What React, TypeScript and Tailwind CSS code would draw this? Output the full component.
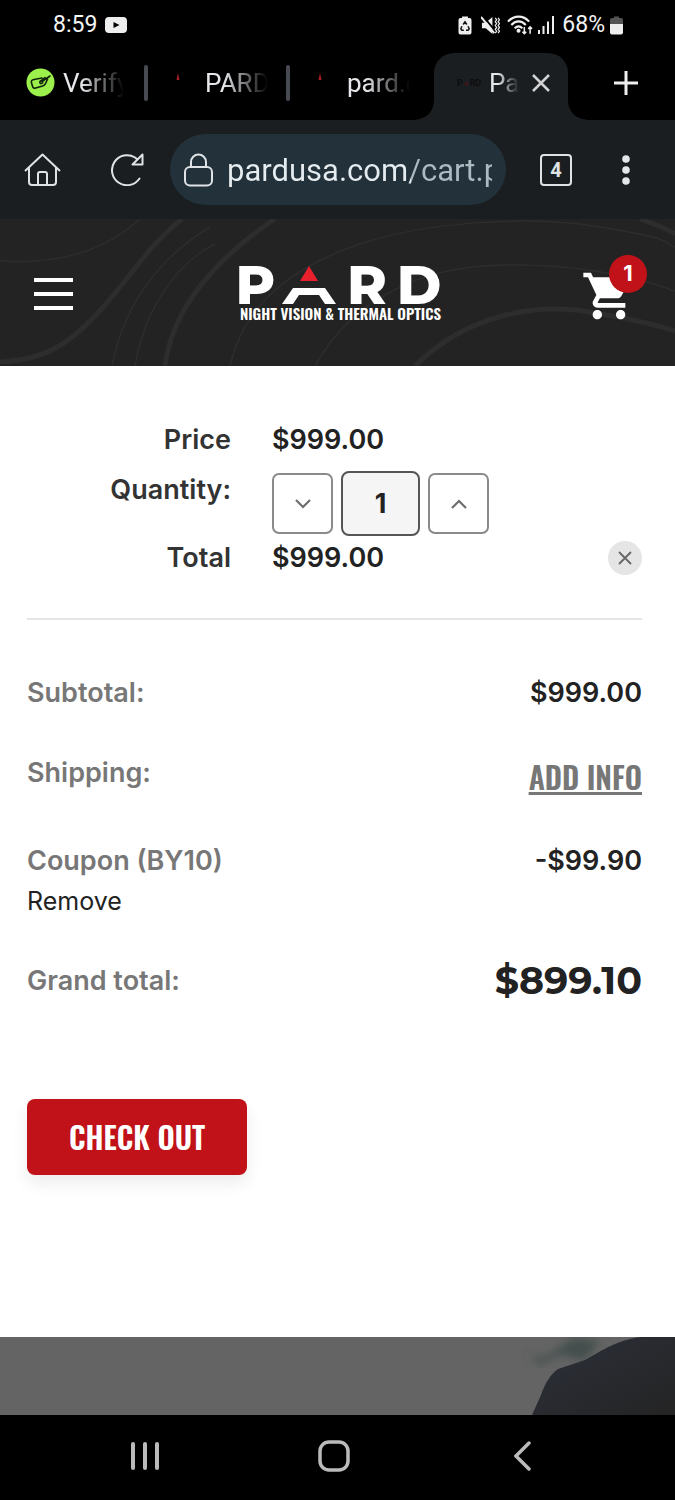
import { useState } from 'react';
import type { ReactNode } from 'react';
import { MdShoppingCart } from 'react-icons/md';

const condensed = 'font-["Oswald","Roboto_Condensed","Liberation_Sans_Narrow","Liberation_Sans",sans-serif]';
const PRICE = 999;

const money = (n: number) => `${n < 0 ? '-' : ''}$${Math.abs(n).toFixed(2)}`;

function StatusBar() {
  return (
    <div className="flex items-center justify-between pt-[9px] pr-[52px] pl-[53px] text-[23px] leading-8 text-gray-100">
      <div className="flex items-center gap-2">
        <span>8:59</span>
        <svg width="22" height="16" viewBox="0 0 22 16">
          <rect width="22" height="16" rx="4" fill="#eee" />
          <path d="M8.5 5v6l6-3z" fill="#000" />
        </svg>
      </div>
      <div className="flex items-center gap-[5px]">
        <svg width="14" height="19" viewBox="0 0 14 19">
          <path d="M4 2V0.5h6V2h1.5A2 2 0 0 1 13.500 4v12.500a2 2 0 0 1-2 2h-9a2 2 0 0 1-2-2V4a2 2 0 0 1 2-2z" fill="#eee" />
          <path d="M5.200 8.500 7 5.800l1.800 2.700M10 10.200l1.200 2.600-1.200 1.400H8M5.800 14.200H4l-1.200-1.400L4 10.200" fill="none" stroke="#111" strokeWidth="1.500" />
        </svg>
        <svg className="ml-1" width="19" height="19" viewBox="0 0 20 20">
          <path d="M1 7h4l7-6v18l-7-6H1z" fill="#eee" />
          <path d="M2 0l14 17" stroke="#000" strokeWidth="2" />
          <path d="M0 1l14 17" stroke="#eee" strokeWidth="2" />
          <path d="M15 2l1.500 2L15 6l1.500 2L15 10l1.500 2L15 14l1.500 2L15 18M18 2l1.500 2L18 6l1.500 2L18 10l1.500 2L18 14l1.500 2L18 18" fill="none" stroke="#eee" strokeWidth="1.300" />
        </svg>
        <svg className="ml-[2px]" width="26" height="20" viewBox="0 0 27 20" fill="none" stroke="#eee" strokeWidth="2.200">
          <path d="M1 6.500C7-.5 17-.5 23 6.500M4.500 10C9 5 15 5 19.500 10M8 13.500c2.500-2.700 5.500-2.700 8 0" />
          <circle cx="12" cy="16" r="1" />
          <path d="M18 12v7M16 17l2 2 2-2M24 19v-7M22 14l2-2 2 2" strokeWidth="1.600" />
        </svg>
        <svg width="17" height="18" viewBox="0 0 17 18" fill="#eee">
          <path d="M0 14h2v4H0zM4.500 10h2v8h-2zM9 5.500h2V18H9zM14 0h2v18h-2z" />
        </svg>
        <span className="ml-[2px]">68%</span>
        <svg width="13" height="19" viewBox="0 0 13 19">
          <path d="M4 2V.5h5V2h2a2 2 0 0 1 2 2v4H0V4a2 2 0 0 1 2-2z" fill="#555" />
          <path d="M0 8h13v8.500a2 2 0 0 1-2 2H2a2 2 0 0 1-2-2z" fill="#eee" />
        </svg>
      </div>
    </div>
  );
}

function TabLabel({ children }: { children: ReactNode }) {
  return (
    <span className="min-w-0 overflow-hidden whitespace-nowrap text-gray-200 [mask-image:linear-gradient(to_right,black_30%,transparent)]">
      {children}
    </span>
  );
}

function RedTick() {
  return (
    <svg className="mb-3 shrink-0" width="6" height="8" viewBox="0 0 6 8">
      <path d="M3 0l1.500 7h-3z" fill="#a81e28" />
    </svg>
  );
}

function TabStrip() {
  return (
    <div className="grid grid-cols-[minmax(0,146fr)_minmax(0,142fr)_minmax(0,146fr)_minmax(0,134fr)_minmax(0,107fr)] pt-3 text-[26px] leading-8">
      <button className="flex items-center gap-2 pr-[22px] pb-2 pl-[26px]">
        <svg className="shrink-0" width="29" height="29" viewBox="0 0 29 29">
          <circle cx="14.500" cy="14.500" r="14" fill="#9cf04c" />
          <path d="M16 10l-8 1.500c-2 .4-3 1.500-2.600 3l1.200 4c.4 1.500 1.600 2 3 1.600l7-2c1.500-.5 2.300-1.300 3-2.700l2-4.400M24 8l-8 5.500M14 13.500c1-1 3-.5 2.700 1-.3 1-2 1.500-2.700.5s.5-2.500 2-3l3-2.500" fill="none" stroke="#10240a" strokeWidth="1.600" strokeLinecap="round" />
        </svg>
        <TabLabel>Verify</TabLabel>
      </button>
      <button className="flex items-center pb-2">
        <span className="-ml-[2px] h-9 w-1 rounded-sm bg-[#484b51]" />
        <span className="flex min-w-0 flex-1 items-center gap-6 pr-5 pl-[27px]">
          <RedTick />
          <TabLabel>PARD</TabLabel>
        </span>
      </button>
      <button className="flex items-center pb-2">
        <span className="-ml-[2px] h-9 w-1 rounded-sm bg-[#484b51]" />
        <span className="flex min-w-0 flex-1 items-center gap-6 pr-6 pl-[27px]">
          <RedTick />
          <TabLabel>pard.c</TabLabel>
        </span>
      </button>
      <div className="relative flex h-[67px] items-center rounded-t-[20px] bg-[#1b1e21] pr-[17px] pb-2 pl-4">
        <svg className="absolute bottom-0 -left-5" width="20" height="20" viewBox="0 0 20 20">
          <path d="M20 0v20H0C12 19 20 12 20 0z" fill="#1b1e21" />
        </svg>
        <svg className="absolute -right-5 bottom-0" width="20" height="20" viewBox="0 0 20 20">
          <path d="M0 0v20h20C8 19 0 12 0 0z" fill="#1b1e21" />
        </svg>
        <span className="flex w-[38px] items-center justify-center text-[9px] leading-4 font-bold text-[#0c0d0f]">
          P<span className="text-[7px] text-[#4a1317]">▲</span>RD
        </span>
        <span className="ml-[1px] flex text-gray-300">
          <TabLabel>Pa</TabLabel>
        </span>
        <button className="ml-auto" aria-label="Close tab">
          <svg width="20" height="20" viewBox="0 0 20 20" stroke="#d0d2d4" strokeWidth="2.500">
            <path d="M2 2l16 16M18 2L2 18" />
          </svg>
        </button>
      </div>
      <button className="flex items-center justify-center pb-2 pl-2" aria-label="New tab">
        <svg width="24" height="24" viewBox="0 0 24 24" stroke="#eee" strokeWidth="3">
          <path d="M12 0v24M0 12h24" />
        </svg>
      </button>
    </div>
  );
}

function Toolbar() {
  return (
    <div className="flex items-center bg-[#1b1e21] pt-[14px] pr-[45px] pb-[14px] pl-6">
      <button aria-label="Home">
        <svg width="37" height="34" viewBox="0 0 37 34" fill="none" stroke="#dfe3e5" strokeWidth="2" strokeLinejoin="round">
          <path d="M1 18L18.500 1.500 36 18M5 14.500V29a3 3 0 0 0 3 3h21a3 3 0 0 0 3-3V14.500M14 32V21a2 2 0 0 1 2-2h5a2 2 0 0 1 2 2v11" />
        </svg>
      </button>
      <button className="ml-[50px]" aria-label="Reload">
        <svg width="33" height="33" viewBox="0 0 33 33" fill="none" stroke="#dfe3e5" strokeWidth="2" strokeLinejoin="round" strokeLinecap="round">
          <path d="M28.500 25.500A15 15 0 1 1 24 4.500l2.500 2M31.500 1.500v10h-10z" />
        </svg>
      </button>
      <label className="ml-[26px] flex h-[71px] min-w-0 flex-1 items-center rounded-full bg-[#22313a] pr-[14px] pl-[14px]">
        <svg className="shrink-0" width="29" height="34" viewBox="0 0 29 34" fill="none" stroke="#dfe3e5" strokeWidth="2">
          <rect x="1" y="14" width="27" height="18.500" rx="5" />
          <path d="M7 14V9a7.500 7.500 0 0 1 15 0v5" />
        </svg>
        <input
          aria-label="Address"
          readOnly
          value="pardusa.com/cart.p"
          className="ml-[14px] h-12 min-w-0 flex-1 bg-linear-to-r from-[#e6edf1] from-[184px] to-[#aebac1] to-[184px] bg-clip-text pt-[2px] text-[31px] text-transparent outline-none"
        />
      </label>
      <button className="ml-[34px] flex size-8 items-center justify-center rounded-[4px] border-2 border-[#dfe3e5] text-xl leading-6 font-bold text-[#dfe3e5]">
        4
      </button>
      <button className="ml-[50px]" aria-label="Menu">
        <svg width="8" height="30" viewBox="0 0 8 30" fill="#e4e6e8">
          <circle cx="4" cy="4" r="3.800" />
          <circle cx="4" cy="15" r="3.800" />
          <circle cx="4" cy="26" r="3.800" />
        </svg>
      </button>
    </div>
  );
}

function Logo() {
  return (
    <a href="/" aria-label="PARD Night Vision & Thermal Optics" className="block w-[202px] pt-3 pb-1 text-white">
      <span className='flex h-10 items-center justify-between font-["Montserrat","DejaVu_Sans",sans-serif] text-[54px] leading-10 font-extrabold'>
        <span className="-ml-1">P</span>
        <svg className="-ml-1" width="56" height="38" viewBox="0 0 56 38">
          <path d="M28 0l9 15H19z" fill="#e8202c" />
          <path d="M12 22h32l11 16H44l-6-9H18l-6 9H1z" fill="#fff" />
        </svg>
        <span>R</span>
        <span>D</span>
      </span>
      <span className={`block text-center text-[15px] leading-4 font-semibold whitespace-nowrap ${condensed}`}>
        NIGHT VISION &amp; THERMAL OPTICS
      </span>
    </a>
  );
}

function SiteHeader({ count }: { count: number }) {
  return (
    <header className="relative bg-[#232323]">
      <svg className="absolute inset-0 size-full" viewBox="0 0 675 147" preserveAspectRatio="none" fill="none" stroke="#2d2d2d">
        <path d="M0 143C50 141 75 120 105 86S150 25 182 0M165 147C172 90 215 40 275 0" strokeWidth="5" />
        <path d="M0 42c60 4 105-10 140-42M112 147C125 80 165 35 210 8M135 147c10-60 45-105 80-122M230 147C245 80 300 45 360 25S520-5 600 8s60 15 75 20M315 147c30-55 90-95 170-100s150 10 190 25" strokeWidth="1.500" />
        <path d="M415 147c50-50 120-65 180-53 30 5 55 10 80 18M640 0c15 5 25 9 35 15" strokeWidth="5" />
      </svg>
      <div className="relative grid grid-cols-[1fr_auto_1fr] items-center pt-[34px] pr-7 pb-[41px] pl-[34px]">
        <button className="flex w-[39px] flex-col gap-[10px] pt-[10px]" aria-label="Open menu">
          <span className="h-1 w-full bg-white" />
          <span className="h-1 w-full bg-white" />
          <span className="h-1 w-full bg-white" />
        </button>
        <Logo />
        <a href="/cart" aria-label="Cart" className="relative block justify-self-end pt-[13px] pr-[10px] text-white">
          <MdShoppingCart size={56} />
          <span className="absolute top-0 right-0 flex size-[38px] items-center justify-center rounded-full bg-[#c01218] font-[Inter] text-[22px] font-bold">
            {count}
          </span>
        </a>
      </div>
    </header>
  );
}

function Chevron({ up }: { up?: boolean }) {
  return (
    <svg width="16" height="10" viewBox="0 0 16 10" fill="none" stroke="#6e6e6e" strokeWidth="2.200">
      <path d={up ? 'M1 9l7-7 7 7' : 'M1 1l7 7 7-7'} />
    </svg>
  );
}

function TotalRow({ label, children }: { label: ReactNode; children: ReactNode }) {
  return (
    <div className="flex items-start justify-between">
      <dt className="font-semibold text-[#777]">{label}</dt>
      <dd className="font-semibold text-[#222]">{children}</dd>
    </div>
  );
}

export default function App() {
  const [qty, setQty] = useState(1);
  const discount = 99.9;
  const total = PRICE * qty;

  const stepBtn = 'flex size-[61px] items-center justify-center rounded-[7px] border-2 border-[#8a8a8a] bg-white';

  return (
    <div className='flex min-h-screen flex-col bg-black font-["Roboto",sans-serif]'>
      <StatusBar />
      <TabStrip />
      <Toolbar />
      <SiteHeader count={qty} />

      <main className='flex-1 bg-white pt-[54px] pr-[33px] pb-10 pl-[27px] font-["Inter",sans-serif] text-[27px] leading-10'>
        <div className="grid grid-cols-[204px_1fr_auto] gap-x-[41px] border-b-2 border-[#e5e5e5] pb-10 font-semibold text-[#333]">
          <div className="text-right">Price</div>
          <div className="col-span-2 text-[#222]">{money(PRICE)}</div>

          <label htmlFor="qty" className="pt-[10px] text-right">Quantity:</label>
          <div className="col-span-2 flex items-center gap-2 pt-[11px] pb-[2px]">
            <button className={stepBtn} aria-label="Decrease quantity" onClick={() => setQty(Math.max(1, qty - 1))}>
              <Chevron />
            </button>
            <input
              id="qty"
              className="h-[65px] w-[79px] rounded-lg border-2 border-[#555] bg-[#f5f5f5] text-center font-bold text-[#222]"
              value={qty}
              onChange={(e) => setQty(Number(e.target.value) || 1)}
            />
            <button className={stepBtn} aria-label="Increase quantity" onClick={() => setQty(qty + 1)}>
              <Chevron up />
            </button>
          </div>

          <div className="text-right">Total</div>
          <div className="text-[#222]">{money(total)}</div>
          <button className="flex size-[34px] items-center justify-center self-center rounded-full bg-[#e5e5e5]" aria-label="Remove item">
            <svg width="14" height="14" viewBox="0 0 14 14" stroke="#666" strokeWidth="1.800">
              <path d="M1 1l12 12M13 1L1 13" />
            </svg>
          </button>
        </div>

        <dl className="mt-[53px] flex flex-col gap-10">
          <TotalRow label="Subtotal:">{money(total)}</TotalRow>
          <TotalRow label="Shipping:">
            <a href="#shipping" className={`block pt-1 pb-1 text-[30px] font-semibold text-[#777] underline decoration-[3px] underline-offset-2 ${condensed}`}>
              ADD INFO
            </a>
          </TotalRow>
          <TotalRow
            label={
              <>
                <div>Coupon (BY10)</div>
                <button className="block text-[25px] font-normal text-[#222]">Remove</button>
              </>
            }
          >
            {money(-discount)}
          </TotalRow>
          <TotalRow label="Grand total:">
            <span className='block font-["Montserrat","Inter",sans-serif] text-[38px] font-bold'>{money(total - discount)}</span>
          </TotalRow>
        </dl>

        <button className={`mt-[98px] rounded-lg bg-[#c01218] px-[42px] py-[18px] text-[30px] font-semibold text-white shadow-[0_8px_16px_rgba(0,0,0,0.08)] ${condensed}`}>
          CHECK OUT
        </button>
      </main>

      <div className="h-[78px] overflow-hidden bg-[#646464]">
        <svg className="size-full" viewBox="0 0 275 78" preserveAspectRatio="xMaxYMid meet">
          <defs>
            <filter id="soft"><feGaussianBlur stdDeviation="4" /></filter>
            <linearGradient id="hill" x1="0" y1="0" x2="1" y2="1">
              <stop offset="0" stopColor="#2c303a" />
              <stop offset="1" stopColor="#242424" />
            </linearGradient>
          </defs>
          <path d="M125 15c20 15 30-5 50-15l25 4-15 20-25-6-20 10z" fill="#45504e" filter="url(#soft)" />
          <path d="M132 78l9-20c5-14 10-21 17-26l27-9C205 12 215 4 240 0h35v78z" fill="url(#hill)" />
        </svg>
      </div>

      <nav className="flex items-center justify-between px-[131px] pt-6 pb-7">
        <button aria-label="Recents">
          <svg width="28" height="33" viewBox="0 0 28 33" stroke="#bbb" strokeWidth="4" strokeLinecap="round">
            <path d="M2 5v24M14 5v24M26 5v24" />
          </svg>
        </button>
        <button className="pr-[6px]" aria-label="Home screen">
          <svg width="32" height="32" viewBox="0 0 32 32" fill="none" stroke="#bbb" strokeWidth="3.500">
            <rect x="2" y="2" width="28" height="28" rx="9" />
          </svg>
        </button>
        <button className="pr-3" aria-label="Back">
          <svg width="18" height="30" viewBox="0 0 18 30" fill="none" stroke="#bbb" strokeWidth="3.500" strokeLinecap="round">
            <path d="M15 2L2 15l13 13" />
          </svg>
        </button>
      </nav>
    </div>
  );
}
